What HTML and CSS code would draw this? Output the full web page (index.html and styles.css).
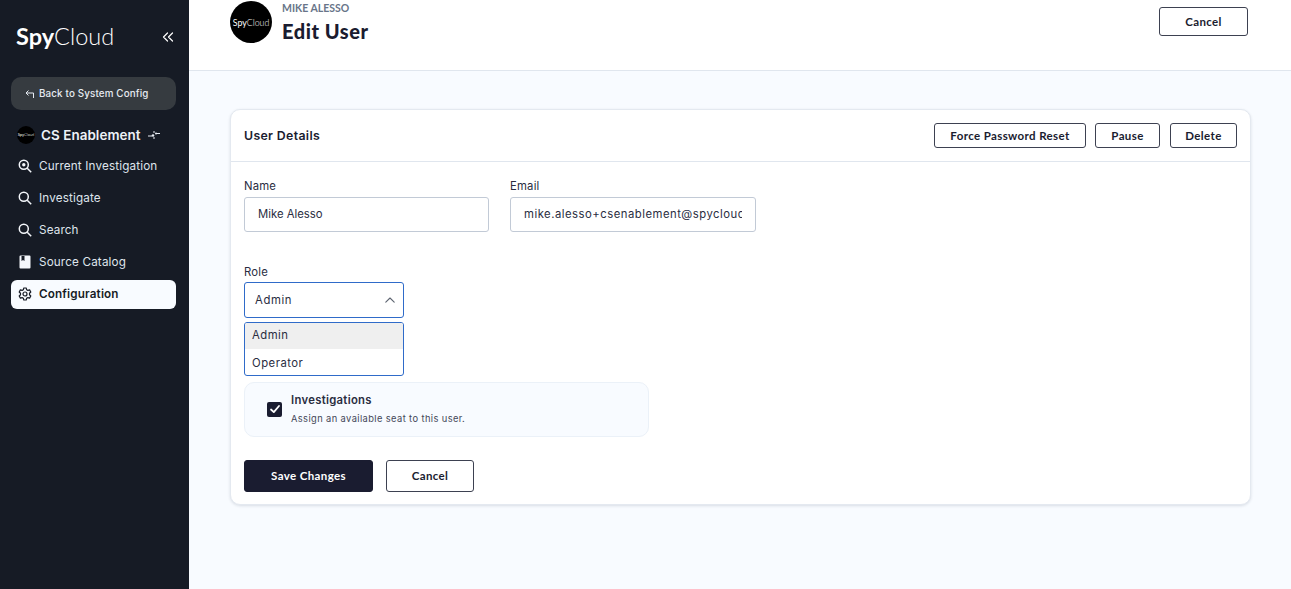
FILE: index.html
```html
<!DOCTYPE html>
<html lang="en">
<head>
<meta charset="utf-8">
<title>Edit User</title>
<link rel="stylesheet" href="styles.css">
</head>
<body>
<div class="app">
  <aside class="sidebar">
    <div class="brand">
      <span class="logo"><b>Spy</b>Cloud</span>
      <svg class="collapse" viewBox="0 0 12 12" width="12" height="12" fill="none" stroke="#fff" stroke-width="1.2" stroke-linecap="round" stroke-linejoin="round"><path d="M5.5 2 1.5 6l4 4M10.500 2l-4 4 4 4"/></svg>
    </div>
    <a class="back">
      <svg viewBox="0 0 10 10" width="10" height="10" fill="none" stroke="#e6ebf2" stroke-width="1"><path d="M3.500 1.500 1 4h7.500v5M1 4l2.500 2.500"/></svg>
      <span>Back to System Config</span>
    </a>
    <div class="org">
      <span class="org-logo"><span><b>Spy</b>Cloud</span></span>
      <span class="org-name">CS Enablement</span>
      <svg viewBox="0 0 12 8" width="12" height="8" fill="none" stroke="#e6ebf2" stroke-width="1"><path d="M0 5h4M8 2.500h4M6 0v2M6 6v2"/><circle cx="5" cy="4.500" r="1.300" fill="#e6ebf2" stroke="none"/><circle cx="8" cy="2.500" r="1" fill="#e6ebf2" stroke="none"/></svg>
    </div>
    <nav class="nav">
      <a class="nav-item">
        <svg viewBox="0 0 14 14" width="14" height="14" fill="none" stroke="#f4f7fb" stroke-width="1.500"><circle cx="5.800" cy="5.800" r="4.500"/><path d="m9.200 9.200 4 4"/><circle cx="5.800" cy="5.800" r="1.700" fill="#f4f7fb" stroke="none"/></svg>
        <span>Current Investigation</span>
      </a>
      <a class="nav-item">
        <svg viewBox="0 0 14 14" width="14" height="14" fill="none" stroke="#f4f7fb" stroke-width="1.500"><circle cx="5.800" cy="5.800" r="4.500"/><path d="m9.200 9.200 4 4"/></svg>
        <span>Investigate</span>
      </a>
      <a class="nav-item">
        <svg viewBox="0 0 14 14" width="14" height="14" fill="none" stroke="#f4f7fb" stroke-width="1.500"><circle cx="5.800" cy="5.800" r="4.500"/><path d="m9.200 9.200 4 4"/></svg>
        <span>Search</span>
      </a>
      <a class="nav-item">
        <svg viewBox="0 0 14 14" width="14" height="14"><path fill-rule="evenodd" fill="#f4f7fb" d="M2.500 0.500h9a1 1 0 0 1 1 1v11a1 1 0 0 1-1 1h-9a1 1 0 0 1-1-1v-11a1 1 0 0 1 1-1ZM3.500 1v5l1.500-1 1.500 1V1Z"/></svg>
        <span>Source Catalog</span>
      </a>
      <a class="nav-item active">
        <svg viewBox="0 0 14 14" width="14" height="14" fill="none" stroke="#161b25" stroke-width="1.200" stroke-linejoin="round"><path d="M5.800 1h2.400l.4 1.700 1.300.7 1.700-.5 1.200 2.100-1.300 1.200v1.600l1.300 1.200-1.200 2.100-1.700-.5-1.300.7L8.200 13H5.800l-.4-1.700-1.300-.7-1.700.5-1.200-2.100 1.300-1.200V6.200L1.200 5l1.200-2.100 1.700.5 1.300-.7Z"/><circle cx="7" cy="7" r="2"/></svg>
        <span>Configuration</span>
      </a>
    </nav>
  </aside>
  <main class="main">
    <header class="page-head">
      <div class="head-left">
        <span class="avatar"><span><b>Spy</b>Cloud</span></span>
        <div class="titles">
          <span class="eyebrow">MIKE ALESSO</span>
          <h1>Edit User</h1>
        </div>
      </div>
      <button class="btn head-cancel">Cancel</button>
    </header>
    <section class="card">
      <div class="card-head">
        <h2>User Details</h2>
        <div class="actions">
          <button class="btn force">Force Password Reset</button>
          <button class="btn pause">Pause</button>
          <button class="btn delete">Delete</button>
        </div>
      </div>
      <div class="card-body">
        <div class="fields">
          <label class="field"><span class="label">Name</span><input class="input" value="Mike Alesso"></label>
          <label class="field"><span class="label">Email</span><input class="input email" value="mike.alesso+csenablement@spycloud.com"></label>
        </div>
        <div class="role">
          <span class="label">Role</span>
          <div class="select">
            <span>Admin</span>
            <svg viewBox="0 0 10 6" width="10" height="6" fill="none" stroke="#5d6470" stroke-width="1.100" stroke-linecap="round" stroke-linejoin="round"><path d="M.8 5.200 5 1l4.200 4.200"/></svg>
          </div>
          <ul class="menu">
            <li class="selected">Admin</li>
            <li>Operator</li>
          </ul>
        </div>
        <div class="seat">
          <span class="check"><svg viewBox="0 0 14 14" width="14" height="14" fill="none" stroke="#fff" stroke-width="1.800" stroke-linecap="round" stroke-linejoin="round"><path d="m3 7.500 2.800 2.600L11 4"/></svg></span>
          <div class="seat-text">
            <strong>Investigations</strong>
            <small>Assign an available seat to this user.</small>
          </div>
        </div>
        <div class="form-actions">
          <button class="btn primary">Save Changes</button>
          <button class="btn form-cancel">Cancel</button>
        </div>
      </div>
    </section>
  </main>
</div>
</body>
</html>
```
FILE: styles.css
```css
* { box-sizing: border-box; }
html, body { margin: 0; height: 100%; overflow: hidden; }
body { font-family: "Inter", "Noto Sans", sans-serif; color: #1a1c30; background: #f8fbff; }
.app { display: flex; height: 589px; }

.sidebar { width: 189px; flex: none; background: #161b25; padding: 0 13px 0 11px; color: #e6ebf2; }
.brand { display: flex; align-items: center; justify-content: space-between; height: 77px; padding: 0 0 3px 5px; }
.logo { font-family: "Lato", sans-serif; font-size: 23.500px; font-weight: 300; color: #fff; line-height: 1; letter-spacing: 0; }
.logo b { font-weight: 700; }
.collapse { margin-right: 2px; }
.back { display: flex; align-items: center; gap: 4px; height: 33px; padding: 0 14px; border-radius: 10px; background: #363b40; font-size: 9.800px; font-weight: 500; letter-spacing: .15px; }
.org { display: flex; align-items: center; height: 33px; margin-top: 8px; padding-left: 6px; }
.org-logo { width: 18px; height: 18px; border-radius: 50%; background: #000; color: #fff; display: flex; align-items: center; justify-content: center; font: 300 4px "Lato", sans-serif; }
.org-name { font-size: 13.400px; font-weight: 600; letter-spacing: .08px; margin: 0 7px 0 6px; color: #eef2f7; white-space: nowrap; }
.nav { display: flex; flex-direction: column; gap: 3px; margin-top: 1px; }
.nav-item { display: flex; align-items: center; gap: 7px; height: 29px; padding: 0 8px 1px 7px; font-size: 11.700px; letter-spacing: .15px; color: #dfe4ec; white-space: nowrap; }
.nav-item.active { background: #f8fbff; border-radius: 6px; color: #161b25; font-weight: 600; }

.main { flex: 1; min-width: 0; }
.page-head { display: flex; justify-content: space-between; height: 71px; padding: 1px 43px 0 41px; background: #fff; border-bottom: 1px solid #e0e6ee; }
.head-left { display: flex; gap: 10px; align-items: flex-start; }
.avatar { width: 42px; height: 42px; border-radius: 50%; background: #000; color: #fff; display: flex; align-items: center; justify-content: center; font: 300 8.800px "Lato", sans-serif; }
.titles { display: flex; flex-direction: column; }
.eyebrow { font-family: "Lato", sans-serif; font-size: 10.500px; font-weight: 700; color: #687589; letter-spacing: 0; line-height: 13px; padding-top: 1px; }
h1 { margin: 4px 0 0; font-family: "Lato", sans-serif; font-size: 20px; line-height: 24px; font-weight: 900; letter-spacing: .55px; color: #1a1c30; }
.btn { font-family: "Lato", sans-serif; font-size: 11.500px; font-weight: 700; letter-spacing: .38px; height: 25px; padding: 0 0 1px; border: 1px solid #3d4151; border-radius: 3px; background: #fff; color: #1a1c30; cursor: pointer; }
.head-cancel { width: 89px; height: 29px; margin-top: 6px; }

.card { margin: 38px 40px 0 41px; height: 396px; background: #fff; border: 1px solid #e4e9f0; border-radius: 10px; box-shadow: 0 1px 3px rgba(30, 40, 70, .14); }
.card-head { display: flex; align-items: center; justify-content: space-between; height: 52px; padding: 0 13px; border-bottom: 1px solid #e0e6ee; }
h2 { margin: 0; font-size: 12.300px; font-weight: 600; letter-spacing: .35px; color: #1a1c30; }
.actions { display: flex; }
.actions .force { width: 152px; margin-right: 9px; }
.actions .pause { width: 65px; margin-right: 10px; }
.actions .delete { width: 67px; }

.card-body { padding: 17px 13px 0; }
.label { display: block; font-size: 11.300px; line-height: 14px; letter-spacing: .2px; color: #2a2d3f; }
.fields { display: flex; gap: 21px; }
.field { display: block; width: 246px; }
.field:first-child { width: 245px; }
.input { display: block; width: 100%; height: 35px; margin-top: 4px; padding: 0 13px 2px; border: 1px solid #c2cad6; border-radius: 3px; font: 400 11.300px "Inter", sans-serif; color: #2a2d3f; background: #fff; outline: none; }
.email { letter-spacing: .5px; }

.role { position: relative; width: 160px; margin-top: 33px; }
.select { display: flex; align-items: center; justify-content: space-between; height: 36px; margin-top: 3px; padding: 0 8px 0 10px; border: 1px solid #2f6bc9; border-radius: 3px; font-size: 11.300px; letter-spacing: .6px; color: #2a2d3f; }
.menu { position: absolute; left: 0; right: 0; top: 57px; margin: 0; padding: 0; list-style: none; background: #fff; border: 1px solid #2f6bc9; border-radius: 3px; overflow: hidden; font-size: 11.300px; letter-spacing: .5px; color: #2a2d3f; }
.menu li { height: 26px; line-height: 25px; padding: 0 7px; }
.menu li + li { padding-top: 1px; line-height: 26px; }
.menu .selected { background: #efefef; }

.seat { display: flex; align-items: center; width: 405px; height: 55px; margin-top: 64px; padding: 0 0 1px 22px; background: #f8fbff; border: 1px solid #ebf1f8; border-radius: 10px; }
.check { width: 15px; height: 15px; display: flex; align-items: center; justify-content: center; background: #1a1c30; border-radius: 2px; margin-right: 9px; }
.seat-text { display: flex; flex-direction: column; margin-top: -1px; }
.seat-text strong { font-size: 11.300px; font-weight: 600; line-height: 15px; letter-spacing: .3px; color: #2a2d3f; }
.seat-text small { font-size: 9.300px; line-height: 12px; margin-top: 5px; letter-spacing: .4px; color: #444859; }

.form-actions { display: flex; gap: 13px; margin-top: 23px; }
.form-actions .btn { height: 32px; }
.primary { width: 129px; background: #1a1c30 !important; border-color: #1a1c30; color: #fff; }
.form-cancel { width: 88px; }
```
